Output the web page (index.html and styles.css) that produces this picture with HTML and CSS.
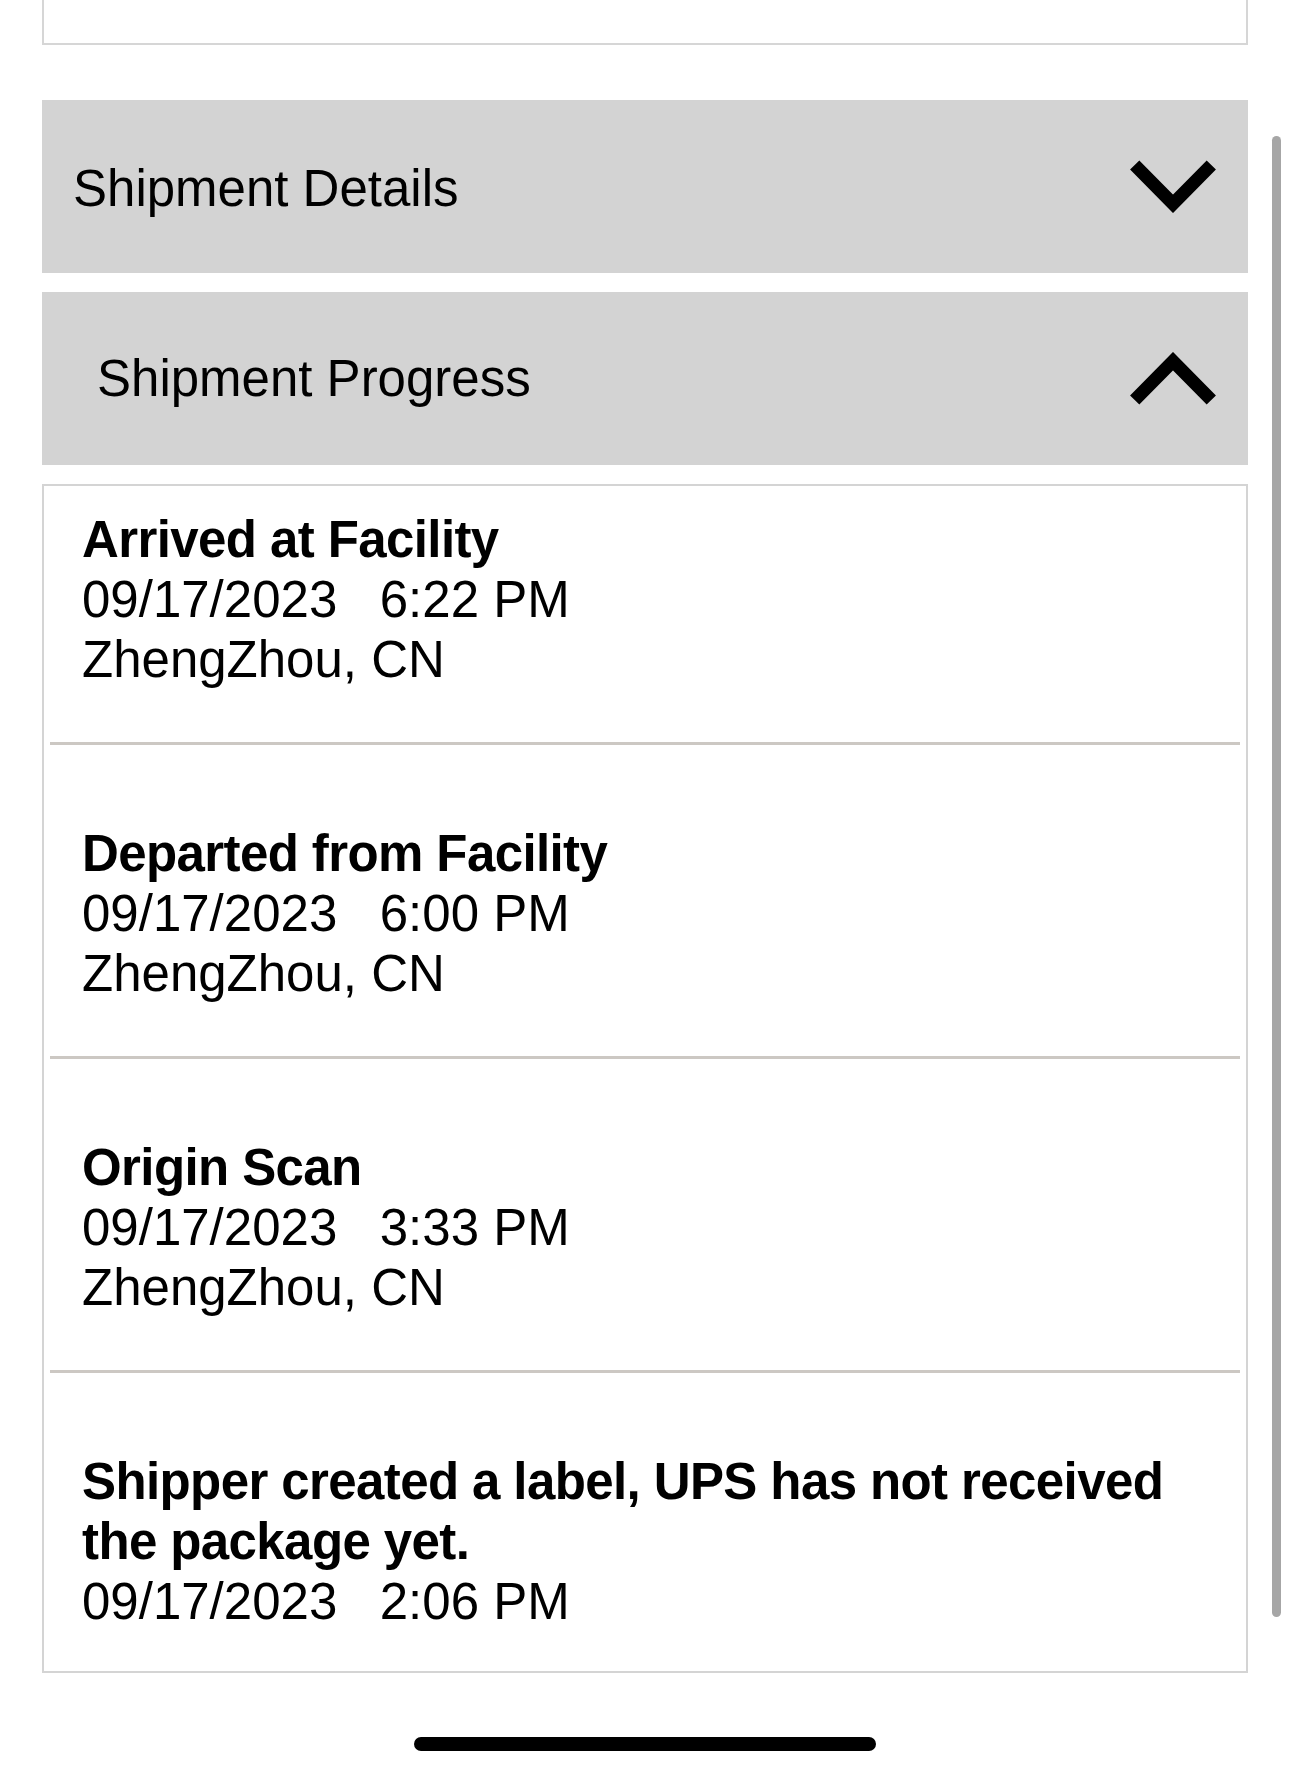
FILE: index.html
```html
<!DOCTYPE html>
<html lang="en">
<head>
<meta charset="utf-8">
<title>Shipment Progress</title>
<link rel="stylesheet" href="styles.css">
</head>
<body>
<div class="screen">
  <div class="top-box"></div>

  <div class="accordion-head head-details">
    <span class="head-title">Shipment Details</span>
    <svg class="chevron" width="86" height="53" viewBox="0 0 86 53" aria-hidden="true">
      <polyline points="4.7,5 43,43.8 81.3,5" fill="none" stroke="#000" stroke-width="13" stroke-linejoin="miter" stroke-linecap="butt"/>
    </svg>
  </div>

  <div class="accordion-head head-progress">
    <span class="head-title indent">Shipment Progress</span>
    <svg class="chevron" width="86" height="53" viewBox="0 0 86 53" aria-hidden="true">
      <polyline points="4.7,48 43,9.2 81.3,48" fill="none" stroke="#000" stroke-width="13" stroke-linejoin="miter" stroke-linecap="butt"/>
    </svg>
  </div>

  <div class="card">
    <div class="event">
      <div class="ev-title">Arrived at Facility</div>
      <div class="ev-line ev-date">09/17/2023   6:22 PM</div>
      <div class="ev-line">ZhengZhou, CN</div>
    </div>
    <div class="event">
      <div class="ev-title">Departed from Facility</div>
      <div class="ev-line ev-date">09/17/2023   6:00 PM</div>
      <div class="ev-line">ZhengZhou, CN</div>
    </div>
    <div class="event">
      <div class="ev-title">Origin Scan</div>
      <div class="ev-line ev-date">09/17/2023   3:33 PM</div>
      <div class="ev-line">ZhengZhou, CN</div>
    </div>
    <div class="event">
      <div class="ev-title">Shipper created a label, UPS has not received the package yet.</div>
      <div class="ev-line ev-date">09/17/2023   2:06 PM</div>
    </div>
  </div>

  <div class="home-indicator"></div>
  <div class="scrollbar"></div>
</div>
</body>
</html>
```
FILE: styles.css
```css
html, body {
  margin: 0;
  padding: 0;
  background: #ffffff;
}

body {
  font-family: "Liberation Sans", Arial, sans-serif;
  color: #000;
}

.screen {
  position: relative;
  width: 1290px;
  height: 1775px;
  overflow: hidden;
  padding: 0 42px;
  box-sizing: border-box;
}

.top-box {
  height: 43px;
  border: 2px solid #d6d6d6;
  border-top: none;
  background: #fff;
}

.accordion-head {
  height: 173px;
  background: #d3d3d3;
  display: flex;
  align-items: center;
  justify-content: space-between;
  padding: 0 32px 0 31px;
  box-sizing: border-box;
}

.head-details {
  margin-top: 55px;
}

.head-details .head-title {
  padding-top: 4px;
}

.head-progress {
  margin-top: 19px;
}

.head-title {
  font-size: 51px;
  line-height: 60px;
  color: #000;
}

.head-title.indent {
  padding-left: 24px;
}

.chevron {
  display: block;
  flex: none;
}

.card {
  margin-top: 19px;
  border: 2px solid #d4d4d4;
  background: #fff;
}

.event {
  margin: 0 6px;
  padding: 79px 0 52px 32px;
  border-bottom: 3px solid #ccc8c3;
  font-size: 51px;
  line-height: 60px;
}

.event:first-child {
  padding-top: 24px;
}

.event:last-child {
  border-bottom: none;
  padding-bottom: 39px;
}

.ev-title {
  font-weight: 700;
  letter-spacing: -0.6px;
}

.ev-line {
  font-weight: 400;
}

.ev-date {
  white-space: pre;
}

.home-indicator {
  width: 462px;
  height: 14px;
  border-radius: 7px;
  background: #000;
  margin: 64px auto 0;
}

.scrollbar {
  position: absolute;
  left: 1272px;
  top: 136px;
  width: 9px;
  height: 1481px;
  border-radius: 5px;
  background: #a6a6a6;
}
```
